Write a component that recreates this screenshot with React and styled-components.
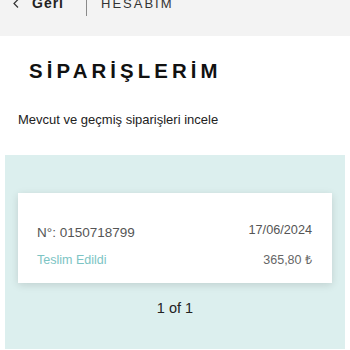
import React from "react";
import styled, { createGlobalStyle } from "styled-components";

const Global = createGlobalStyle`
  html, body { margin: 0; padding: 0; background: #ffffff; }
  body { font-family: "Liberation Sans", Arial, sans-serif; overflow: hidden; }
`;

const Page = styled.div`
  width: 350px;
  height: 350px;
  display: flex;
  flex-direction: column;
  background: #fff;
  overflow: hidden;
`;

const Header = styled.header`
  height: 36px;
  background: #f3f3f3;
  flex-shrink: 0;
`;

const Nav = styled.nav`
  display: flex;
  align-items: center;
  height: 20px;
  margin-top: -7px;
  padding-left: 13px;
`;

const Back = styled.span`
  display: flex;
  align-items: center;
  gap: 13px;
  font-size: 14px;
  line-height: 1;
  font-weight: 700;
  letter-spacing: 1px;
  color: #222;
`;

const Divider = styled.span`
  align-self: flex-start;
  width: 1px;
  height: 16px;
  margin: 7px 14px 0 22px;
  background: #8a8a8a;
`;

const Crumb = styled.span`
  font-size: 13px;
  line-height: 1;
  letter-spacing: 2px;
  color: #333;
`;

const Title = styled.h1`
  margin: 25px 0 0 29px;
  font-size: 20.4px;
  line-height: 1;
  font-weight: 700;
  letter-spacing: 4.1px;
  color: #111;
`;

const Subtitle = styled.p`
  margin: 32px 0 0 18px;
  font-size: 13px;
  line-height: 1;
  color: #222;
`;

const Panel = styled.section`
  margin: 29px 5px 0 5px;
  padding: 38px 13px 34px;
  background: #dcefee;
  display: flex;
  flex-direction: column;
  align-items: stretch;
`;

const Card = styled.div`
  background: #fff;
  box-shadow: 0 2px 8px rgba(0, 0, 0, 0.13);
  padding: 31px 20px 16px 19px;
  display: flex;
  flex-direction: column;
  gap: 15px;
`;

const Row = styled.div`
  display: flex;
  justify-content: space-between;
  align-items: flex-end;
`;

const Text = styled.span`
  font-size: ${(p) => p.$size}px;
  line-height: 1;
  color: ${(p) => p.$color || "#555"};
  margin-bottom: ${(p) => p.$lift || 0}px;
`;

const Pager = styled.div`
  margin-top: 18px;
  text-align: center;
  font-size: 14.5px;
  line-height: 1;
  color: #222;
`;

export default function App() {
  return (
    <Page>
      <Global />
      <Header>
        <Nav>
          <Back>
            <svg width="6" height="9" viewBox="0 0 6 9">
              <polyline points="5,0.5 1,4.5 5,8.5" fill="none" stroke="#333" strokeWidth="1.2" />
            </svg>
            Geri
          </Back>
          <Divider />
          <Crumb>HESABIM</Crumb>
        </Nav>
      </Header>
      <Title>SİPARİŞLERİM</Title>
      <Subtitle>Mevcut ve geçmiş siparişleri incele</Subtitle>
      <Panel>
        <Card>
          <Row>
            <Text $size={13.5}>N°: 0150718799</Text>
            <Text $size={12.7} $lift={2}>17/06/2024</Text>
          </Row>
          <Row>
            <Text $size={12.5} $color="#7cc4c4">Teslim Edildi</Text>
            <Text $size={12.5} $color="#666">365,80 ₺</Text>
          </Row>
        </Card>
        <Pager>1 of 1</Pager>
      </Panel>
    </Page>
  );
}
